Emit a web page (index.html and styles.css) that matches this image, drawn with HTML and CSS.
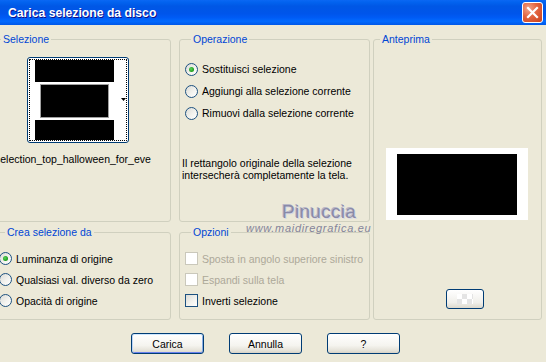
FILE: index.html
```html
<!DOCTYPE html>
<html lang="it">
<head>
    <meta charset="UTF-8">
    <title>Carica selezione da disco</title>
    <link rel="stylesheet" href="styles.css">
</head>
<body>
    <div class="titlebar">
        <span class="title">Carica selezione da disco</span>
        <span class="close">
            <svg width="13" height="13" viewBox="0 0 13 13"><path d="M2 2 L11 11 M11 2 L2 11" stroke="#fff" stroke-width="2.2" stroke-linecap="square"/></svg>
        </span>
    </div>

    <div class="client">
        <div class="panels">
            <div class="col col-left">
                <fieldset class="group sel">
                    <legend>Selezione</legend>
                    <div class="thumb">
                        <svg width="100" height="84" viewBox="0 0 100 84">
                            <rect x="7" y="2" width="79" height="22" fill="#000"/>
                            <rect x="12.5" y="26.5" width="68" height="33" fill="#000" stroke="#a0a0a0"/>
                            <rect x="7" y="62" width="79" height="20" fill="#000"/>
                            <polygon points="93,40 98,40 95.5,43" fill="#000"/>
                        </svg>
                    </div>
                    <div class="filename">selection_top_halloween_for_eve</div>
                </fieldset>
                <fieldset class="group crea">
                    <legend>Crea selezione da</legend>
                    <div class="opt"><span class="radio checked"></span>Luminanza di origine</div>
                    <div class="opt"><span class="radio"></span>Qualsiasi val. diverso da zero</div>
                    <div class="opt"><span class="radio"></span>Opacità di origine</div>
                </fieldset>
            </div>

            <div class="col col-mid">
                <fieldset class="group oper">
                    <legend>Operazione</legend>
                    <div class="opt"><span class="radio checked"></span>Sostituisci selezione</div>
                    <div class="opt"><span class="radio"></span>Aggiungi alla selezione corrente</div>
                    <div class="opt"><span class="radio"></span>Rimuovi dalla selezione corrente</div>
                    <p class="note">Il rettangolo originale della selezione intersecherà completamente la tela.</p>
                </fieldset>
                <fieldset class="group opz">
                    <legend>Opzioni</legend>
                    <div class="opt disabled"><span class="check"></span>Sposta in angolo superiore sinistro</div>
                    <div class="opt disabled"><span class="check"></span>Espandi sulla tela</div>
                    <div class="opt"><span class="check"></span>Inverti selezione</div>
                </fieldset>
            </div>

            <fieldset class="group ante">
                <legend>Anteprima</legend>
                <div class="preview"><div class="preview-img"></div></div>
                <div class="mini-btn"><span class="checker"></span></div>
            </fieldset>
        </div>

        <div class="buttons">
            <div class="btn default">Carica</div>
            <div class="btn">Annulla</div>
            <div class="btn">?</div>
        </div>

        <!-- filigrana sopra il dialogo -->
        <div class="wm-name">Pinuccia</div>
        <div class="wm-site">www.maidiregrafica.eu</div>
    </div>
</body>
</html>
```

FILE: styles.css
```css
*{
    margin: 0;
    padding: 0;
    box-sizing: border-box;
}
body{
    width: 546px;
    height: 362px;
    overflow: hidden;
    background: #ece9d8;
    font-family: "Liberation Sans", Arial, sans-serif;
    font-size: 10.5px;
    color: #000;
}

/* barra del titolo */
.titlebar{
    height: 25px;
    display: flex;
    align-items: center;
    justify-content: space-between;
    padding: 0 3px 0 8px;
    background: linear-gradient(to bottom, #0a68f4 0%, #0262ee 10%, #0057e5 25%, #0055eb 55%, #005bf5 70%, #026afe 85%, #0058e8 100%);
}
.title{
    color: #fff;
    font-weight: bold;
    font-size: 12.2px;
    text-shadow: 1px 1px 0 #0f1089;
}
.close{
    width: 21px;
    height: 21px;
    border: 1px solid #fff;
    border-radius: 3px;
    display: flex;
    align-items: center;
    justify-content: center;
    background: radial-gradient(circle at 30% 30%, #f0a58c 0%, #e2643f 45%, #c8401c 100%);
}

/* area client */
.client{
    position: relative;
    margin-left: -6px;
    padding-top: 8px;
}
.panels{
    display: flex;
    align-items: flex-start;
}
.col{
    display: flex;
    flex-direction: column;
    gap: 4px;
}
.col-left{
    width: 177px;
}
.col-mid{
    width: 191px;
    margin-left: 8px;
}

.group{
    border: 1px solid #d0d0bf;
    border-radius: 3px;
    min-width: 0;
}
.group legend{
    margin-left: 6px;
    padding: 0 2px;
    line-height: 13px;
    color: #0046d5;
}
.sel, .oper{
    height: 189px;
}
.crea, .opz{
    height: 94px;
    padding-top: 9px;
}
.crea{
    padding-left: 4px;
}
.opz{
    padding-left: 5px;
}
.oper{
    padding-top: 12px;
    padding-left: 5px;
}
.ante{
    width: 169px;
    height: 287px;
    margin-left: 3px;
}

/* selezione */
.thumb{
    width: 102px;
    height: 86px;
    margin: 11px 0 0 32px;
    border: 1px solid #003c74;
    border-radius: 3px;
    background: #fff;
    outline: 1px dotted #000;
    outline-offset: -3px;
}
.thumb svg{
    display: block;
}
.filename{
    margin-top: 10px;
    line-height: 13px;
    white-space: nowrap;
}

/* opzioni e radio */
.opt{
    display: flex;
    align-items: center;
    gap: 4px;
    white-space: nowrap;
}
.crea .opt, .opz .opt{
    height: 21px;
}
.oper .opt{
    height: 22px;
}
.opt.disabled{
    color: #aca899;
}
.radio{
    width: 13px;
    height: 13px;
    flex: none;
    border: 1px solid #1c5180;
    border-radius: 50%;
    background: linear-gradient(135deg, #dcdcd7 0%, #f4f4f0 60%, #fff 100%);
    display: flex;
    align-items: center;
    justify-content: center;
}
.radio.checked::after{
    content: "";
    width: 5px;
    height: 5px;
    border-radius: 50%;
    background: radial-gradient(circle at 40% 40%, #5ed35e 0%, #21a121 60%, #1a8a1a 100%);
}
.check{
    width: 13px;
    height: 13px;
    flex: none;
    border: 1px solid #1c5180;
    background: linear-gradient(135deg, #dcdcd7 0%, #f4f4f0 60%, #fff 100%);
}
.disabled .check{
    border-color: #cac8bb;
    background: #fff;
}
.note{
    margin-top: 33px;
    margin-left: -3px;
    line-height: 12px;
}

/* anteprima */
.preview{
    width: 142px;
    height: 72px;
    margin: 102px 0 0 12px;
    padding: 6px 11px 5px;
    background: #fff;
}
.preview-img{
    width: 100%;
    height: 100%;
    background: #000;
}
.mini-btn{
    width: 38px;
    height: 20px;
    margin: 69px 0 0 72px;
    border: 1px solid #003c74;
    border-radius: 3px;
    background: linear-gradient(#fff, #f0efea 70%, #dcd8cc);
    display: flex;
    align-items: center;
    justify-content: center;
}
.checker{
    width: 16px;
    height: 10px;
    background: repeating-conic-gradient(#e4e4e4 0 25%, #fff 0 50%) 0 0 / 10px 10px;
}

/* pulsanti */
.buttons{
    display: flex;
    gap: 25px;
    margin-top: 13px;
    padding-left: 137px;
}
.btn{
    width: 73px;
    height: 21px;
    border: 1px solid #003c74;
    border-radius: 3px;
    background: linear-gradient(#fff 0%, #f5f4ef 60%, #e3e0d6 90%, #d6d0c5 100%);
    display: flex;
    align-items: center;
    justify-content: center;
}
.btn.default{
    box-shadow: inset 0 1px 0 #cee7ff, inset 1px 0 0 #bcd4f6, inset -1px 0 0 #89ade4, inset 0 -1px 0 #6982ee;
}

/* filigrana */
.wm-name{
    position: absolute;
    left: 288px;
    top: 177px;
    font-size: 19px;
    line-height: 19px;
    letter-spacing: 0.3px;
    color: #8a8aa8;
    text-shadow: 1px 1px 0 #d8d8e4, -1px -1px 0 #b8b8c8;
}
.wm-site{
    position: absolute;
    left: 252px;
    top: 198px;
    font-size: 11px;
    line-height: 11px;
    font-style: italic;
    letter-spacing: 0.7px;
    color: #84849a;
}
```
